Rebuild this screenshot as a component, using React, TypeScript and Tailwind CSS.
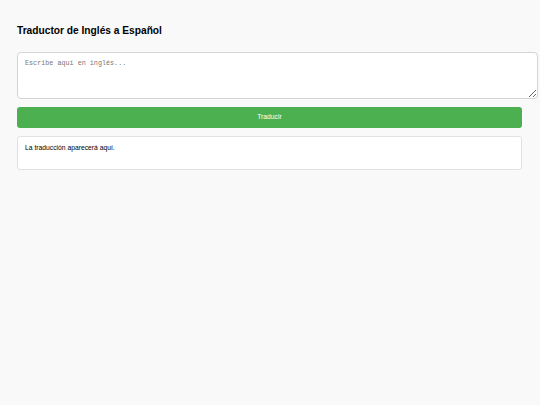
export default function App() {
  return (
    <div
      className="min-h-screen bg-[#f9f9f9] px-[17px] pt-[24px] text-black"
      style={{ fontFamily: '"Liberation Sans", Arial, sans-serif' }}
    >
      <div className="w-[505px]">
        <h2 className="text-[10.2px] leading-[14px] font-bold">Traductor de Inglés a Español</h2>
        <textarea
          className="mt-[14px] box-border block h-[47px] w-[521px] resize-y rounded-[4px] border border-[#d4d4d4] bg-white px-[7px] py-[6px] text-[6.75px] leading-[9px] outline-none placeholder:text-[#777]"
          style={{ fontFamily: '"Liberation Mono", "DejaVu Sans Mono", monospace' }}
          placeholder="Escribe aquí en inglés..."
        />
        <button
          type="button"
          className="mt-[8px] block h-[21px] w-full rounded-[3px] bg-[#4caf50] text-[6.75px] text-white"
        >
          Traducir
        </button>
        <div className="mt-[8px] h-[34px] rounded-[3px] border border-[#e2e2e2] bg-white px-[7px] py-[6px] text-[6.75px] leading-[9px]">
          La traducción aparecerá aquí.
        </div>
      </div>
    </div>
  );
}
